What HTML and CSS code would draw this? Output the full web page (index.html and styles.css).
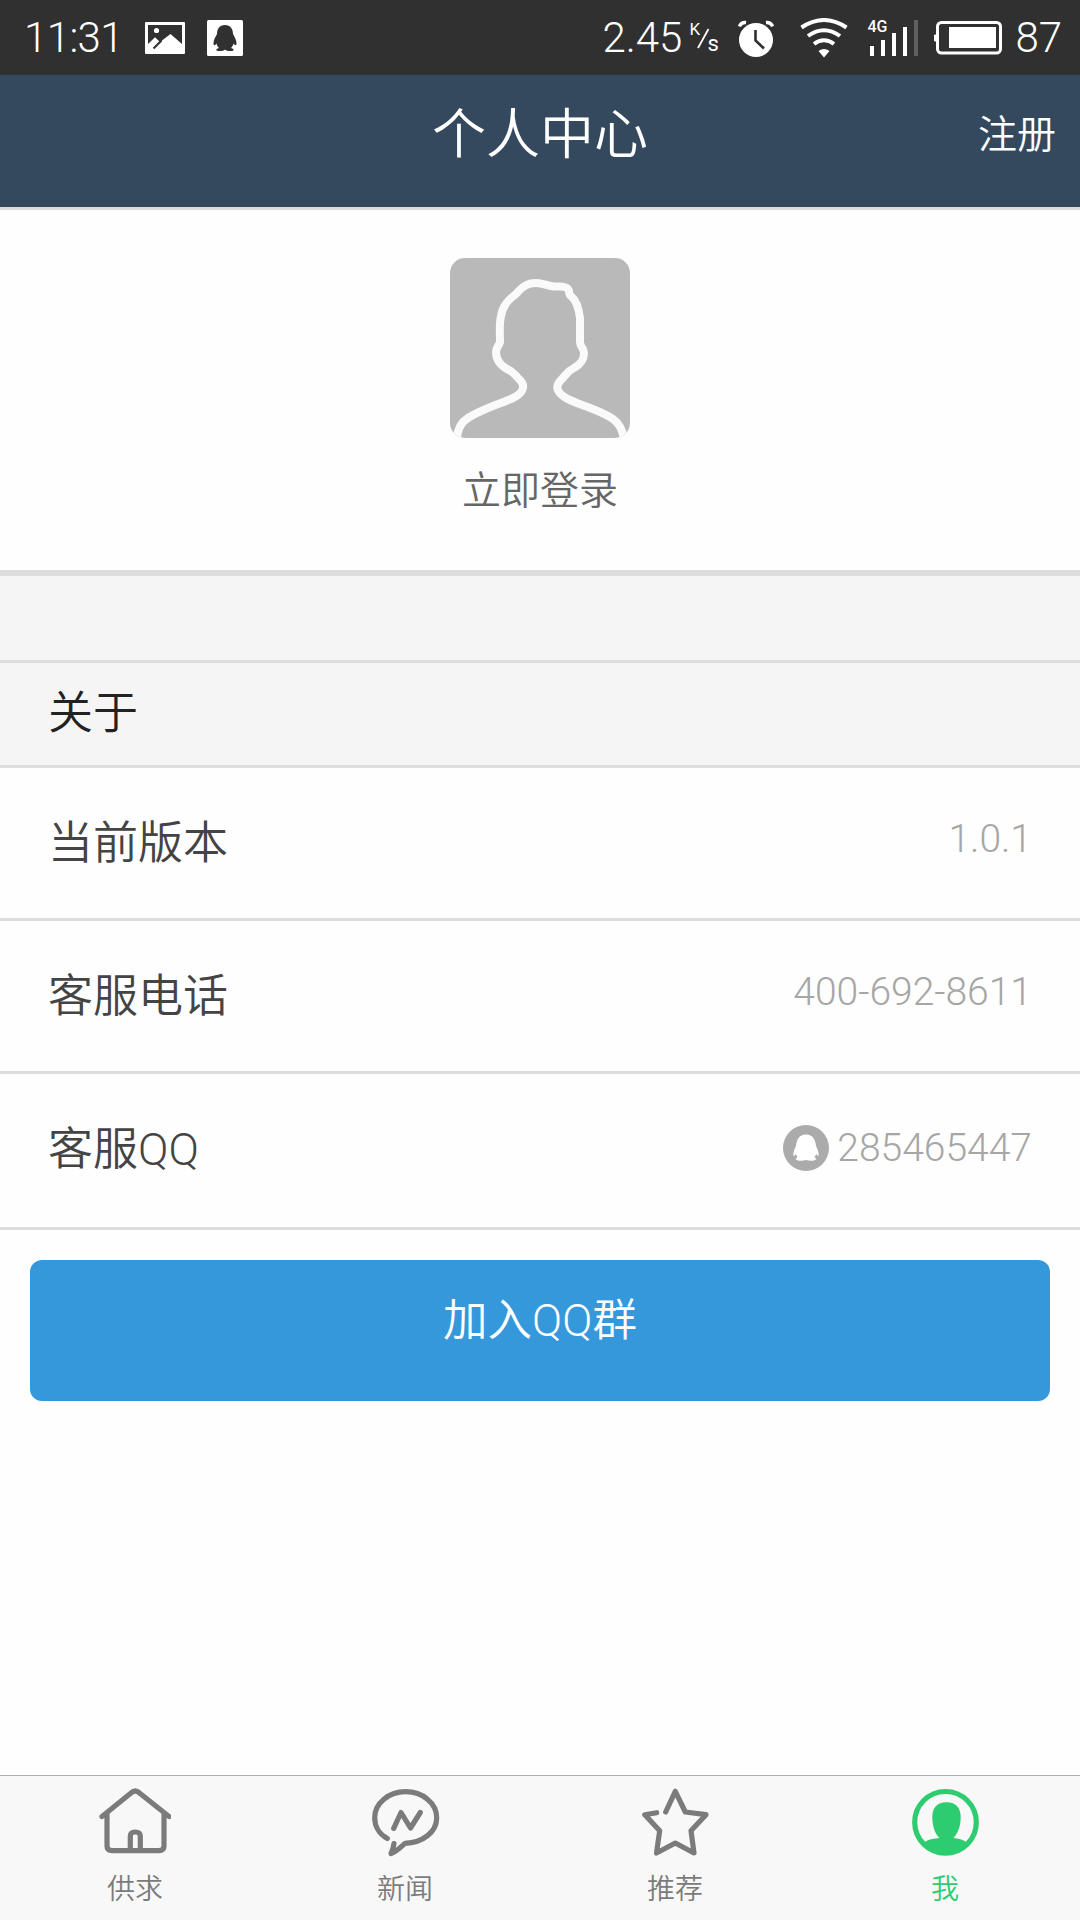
FILE: index.html
```
<!DOCTYPE html>
<html lang="zh-CN">
<head>
<meta charset="UTF-8" />
<meta name="viewport" content="width=device-width, initial-scale=1" />
<title>个人中心</title>
<link rel="stylesheet" href="styles.css">
</head>
<body>

<div class="statusbar">
  <span class="time">11:31</span>
  <svg class="icon-picture" width="40" height="32" viewBox="0 0 40 32">
    <path fill="#fff" fill-rule="evenodd" d="M1 0H39Q40 0 40 1V31Q40 32 39 32H1Q0 32 0 31V1Q0 0 1 0ZM3 3V22L10 15.3L15 20L25.500 12L37 22V3Z" />
    <circle cx="11.500" cy="8.500" r="2.600" fill="#fff" />
    <path d="M8.500 26.500L16.500 18.500" stroke="#303030" stroke-width="2.200" />
  </svg>
  <svg class="icon-qq" width="36" height="36" viewBox="0 0 36 36">
    <rect width="36" height="36" rx="1.500" fill="#fff" />
    <path fill="#303030" d="M18 5C12.500 5 10 9 10 14C8.500 17 6.500 20 6.500 23C6.500 26 8 25.500 9.500 23.500C10 25.500 11 27 12 28C8 29 8.500 31 12.500 31C15 31 17 30.500 18 29.500C19 30.500 21 31 23.500 31C27.500 31 28 29 24 28C25 27 26 25.500 26.500 23.500C28 25.500 29.500 26 29.500 23C29.500 20 27.500 17 26 14C26 9 23.500 5 18 5Z" />
  </svg>

  <div class="status-right">
    <span class="speed">2.45</span>
    <div class="speed-unit">
      <span class="unit-k">K</span>
      <svg width="13" height="34" viewBox="0 0 13 34">
        <path d="M1 27L11.500 8" stroke="#fff" stroke-width="1.800" />
      </svg>
      <span class="unit-s">s</span>
    </div>
    <svg class="icon-alarm" width="36" height="38" viewBox="0 0 36 38">
      <circle cx="18" cy="21" r="17" fill="#fff" />
      <path d="M1.500 7.500Q3 3 8 3.500M28 3.500Q33 3 34.500 7.500" fill="none" stroke="#fff" stroke-width="3.500" />
      <path d="M17.500 11V21.500L26 29.500" fill="none" stroke="#303030" stroke-width="2.600" />
    </svg>
    <svg class="icon-wifi" width="48" height="40" viewBox="0 0 48 40">
      <g fill="none" stroke="#fff" stroke-width="4">
        <path d="M1.500 9.500Q24 -5.500 46.500 9.500" />
        <path d="M8 18Q24 6.500 40 18" />
        <path d="M14 26Q24 18.500 34 26" />
      </g>
      <path d="M18.500 33Q24 29 29.500 33L24 39.500Z" fill="#fff" />
    </svg>
    <div class="network">
      <span class="net-text">4G</span>
      <svg class="icon-signal" width="50" height="36" viewBox="0 0 50 36">
        <path d="M2 26h4v10h-4zM13 20h4v16h-4zM24 13h4v23h-4zM35 7h4v29h-4z" fill="#fff" />
        <path d="M46 0h4v36h-4z" fill="#606060" />
      </svg>
    </div>
    <svg class="icon-battery" width="68" height="34" viewBox="0 0 68 34">
      <rect x="3.500" y="1.500" width="63" height="30.500" rx="4" fill="none" stroke="#fff" stroke-width="3" />
      <path d="M0.500 14H2V20H0.500Z" fill="#fff" stroke="#fff" />
      <rect x="15" y="6" width="47" height="21" fill="#fff" />
    </svg>
    <span class="battery-level">87</span>
  </div>
</div>

<div class="header">
  <h1 class="title">个人中心</h1>
  <a class="register">注册</a>
</div>

<div class="profile">
  <svg class="avatar" width="180" height="180" viewBox="0 0 180 180">
    <rect width="180" height="180" fill="#b9b9b9" />
    <path fill="none" stroke="#fafafa" stroke-width="8" stroke-linejoin="round" d="M7 182C7 172 10 165 18 160C32 151 50 146 63 140C74 135 76 127 69 121C64 116 64 114 57 111C50 107 46 102 46 94C46 89 49 88 50 84C50 75 49 66 51 58C53 46 60 41 66 36C72 29 77 25 86 25C93 25 98 28 104 28.500C109 29 114 27 118 31C120 33 118 36 121 38C127 43 129 52 130 60V84C130 89 134 90 134 95C134 102 131 106 124 110C116 114 116 117 111 122C105 128 106 134 116 140C128 147 148 151 163 161C170 166 173 173 174 182" />
  </svg>
  <div class="login">立即登录</div>
</div>

<div class="spacer"></div>
<div class="section-title">关于</div>

<div class="list">
  <div class="row">
    <span class="label">当前版本</span>
    <span class="value">1.0.1</span>
  </div>
  <div class="row">
    <span class="label">客服电话</span>
    <span class="value">400-692-8611</span>
  </div>
  <div class="row row-qq">
    <span class="label">客服QQ</span>
    <span class="value">
      <svg class="qq-round" width="46" height="46" viewBox="0 0 46 46">
        <circle cx="23" cy="23" r="23" fill="#ababab" />
        <path fill="#fff" d="M23 9.500C16 9.500 13.500 15 13 21C11 25 10 28 10.500 31C11.500 31.500 12 29.500 12.500 29L14.500 32L12.500 34C15 36.500 20 36 23 35C26 36 31 36.500 33.500 34L31.500 32L33.500 29C34 29.500 34.500 31.500 35.500 31C36 28 35 25 33 21C32.500 15 30 9.500 23 9.500Z" />
      </svg>285465447</span>
  </div>
</div>

<button class="btn-join">加入QQ群</button>

<div class="tabbar">
  <a class="tab">
    <svg width="72" height="70" viewBox="0 0 72 70">
      <path d="M3 28.500L32 5Q36.300 1 40.500 5L70 28.500M8 26V58Q8 62.700 13 62.700H60Q65 62.700 65 58V26M31.300 62V48Q31.300 44 36.300 44T41.300 48V62" />
    </svg>
    <span>供求</span>
  </a>
  <a class="tab">
    <svg width="72" height="70" viewBox="0 0 72 70">
      <path d="M18.300 50.500C10 46 5.700 38 5.700 29.700C5.700 15 20 3.700 36.700 3.700S67.700 15 67.700 29.700S53 55 36 55.300C32 59 27 64 22 65.500Q24.500 60 25 55.500M24.700 40.300L32 24.500L41.500 40L51.300 24.500" />
    </svg>
    <span>新闻</span>
  </a>
  <a class="tab">
    <svg width="72" height="70" viewBox="0 0 72 70">
      <path d="M26.700 24L36.300 3.300L46.300 24L67 26.700L52 42.700L55 65L36.300 55L17.500 65L20.700 42.700L5.800 26.700L17.700 24.700" />
    </svg>
    <span>推荐</span>
  </a>
  <a class="tab active">
    <svg width="72" height="70" viewBox="0 0 72 70">
      <circle cx="36.500" cy="34.300" r="30.800" />
      <path class="solid" d="M37.500 14.300C28 14.300 23.300 20 23.300 29C23.300 38 26 46 30.500 50C25 50.500 19 51 15.500 54.500Q24 66 36.500 66T57.500 54.500C54 51 49 50.500 44.500 50C49 45 51.700 38 51.700 29C51.700 20 47 14.300 37.500 14.300Z" />
    </svg>
    <span>我</span>
  </a>
</div>

</body>
</html>
```

FILE: styles.css
```
* {
  box-sizing: border-box;
}

body {
  margin: 0;
  height: 1920px;
  display: flex;
  flex-direction: column;
  background: #fefefe;
  font-family: Roboto, "Noto Sans CJK SC", sans-serif;
  font-weight: 350;
  overflow: hidden;
}

svg {
  display: block;
  flex-shrink: 0;
}

.statusbar {
  height: 75px;
  padding: 0 18px 0 24px;
  display: flex;
  align-items: center;
  background: #303030;
  color: #fff;
  font-size: 42px;
  font-weight: 300;
  line-height: 75px;
}

.time {
  width: 121px;
  letter-spacing: -0.6px;
}

.icon-qq {
  margin-left: 22px;
}

.status-right {
  margin-left: auto;
  display: flex;
  align-items: center;
}

.speed-unit {
  width: 30px;
  margin-left: 7px;
  display: flex;
  align-items: center;
  font-size: 17px;
  font-weight: 400;
}

.unit-k {
  width: 8px;
  padding-bottom: 17px;
}

.unit-s {
  margin-left: -3px;
  padding-top: 11px;
  font-size: 22px;
}

.icon-alarm {
  margin-left: 19px;
}

.icon-wifi {
  margin-left: 26px;
}

.network {
  height: 36px;
  margin-left: 20px;
  display: grid;
}

.net-text,
.icon-signal {
  grid-area: 1 / 1;
}

.net-text {
  font-size: 16px;
  font-weight: 500;
  line-height: 13px;
  margin-left: -1px;
}

.icon-battery {
  margin-left: 16px;
}

.battery-level {
  margin-left: 13px;
}

.header {
  height: 135px;
  padding: 0 24px;
  display: grid;
  grid-template-columns: 1fr auto 1fr;
  background: #34495e;
  border-bottom: 3px solid #ddd;
  color: #fff;
  line-height: 121px;
}

.title {
  grid-column: 2;
  margin: 0;
  font-size: 54px;
  font-weight: 350;
  line-height: 122px;
}

.register {
  text-align: right;
  font-size: 39px;
}

.profile {
  height: 366px;
  padding-top: 48px;
  display: flex;
  flex-direction: column;
  align-items: center;
  border-bottom: 6px solid #ddd;
}

.avatar {
  border-radius: 15px;
}

.login {
  margin-top: 23px;
  font-size: 39px;
  line-height: 60px;
  color: #666;
}

.spacer {
  height: 87px;
  background: #f5f5f5;
  border-bottom: 3px solid #ddd;
}

.section-title {
  height: 105px;
  padding-left: 48px;
  background: #f5f5f5;
  border-bottom: 3px solid #ddd;
  font-size: 45px;
  line-height: 102px;
  color: #222;
}

.row {
  height: 153px;
  padding: 0 48px;
  display: flex;
  justify-content: space-between;
  border-bottom: 3px solid #ddd;
  line-height: 151px;
}

.row-qq {
  height: 156px;
}

.label {
  font-size: 45px;
  color: #444;
}

.value {
  height: 143px;
  display: flex;
  align-items: center;
  font-size: 39px;
  font-weight: 300;
  line-height: 143px;
  color: #a6a6a6;
}

.row-qq .value {
  height: 148px;
  line-height: 148px;
}

.qq-round {
  margin-right: 8px;
}

.btn-join {
  height: 141px;
  margin: 30px 30px 0;
  padding: 0 0 28px;
  border: none;
  border-radius: 12px;
  background: #3498db;
  color: #fff;
  font-family: inherit;
  font-size: 44.5px;
  font-weight: 350;
}

.tabbar {
  height: 145px;
  margin-top: auto;
  padding-top: 12px;
  display: flex;
  background: #f8f8f8;
  border-top: 1px solid #b0b0b0;
}

.tab {
  flex: 1;
  display: flex;
  flex-direction: column;
  align-items: center;
  font-size: 28px;
  line-height: 40px;
  color: #7b7b7b;
}

.tab svg {
  margin-bottom: 12px;
  fill: none;
  stroke: currentColor;
  stroke-width: 5.2px;
  stroke-linecap: round;
  stroke-linejoin: round;
}

.tab .solid {
  fill: currentColor;
  stroke: none;
}

.active {
  color: #2ecc71;
}
```
